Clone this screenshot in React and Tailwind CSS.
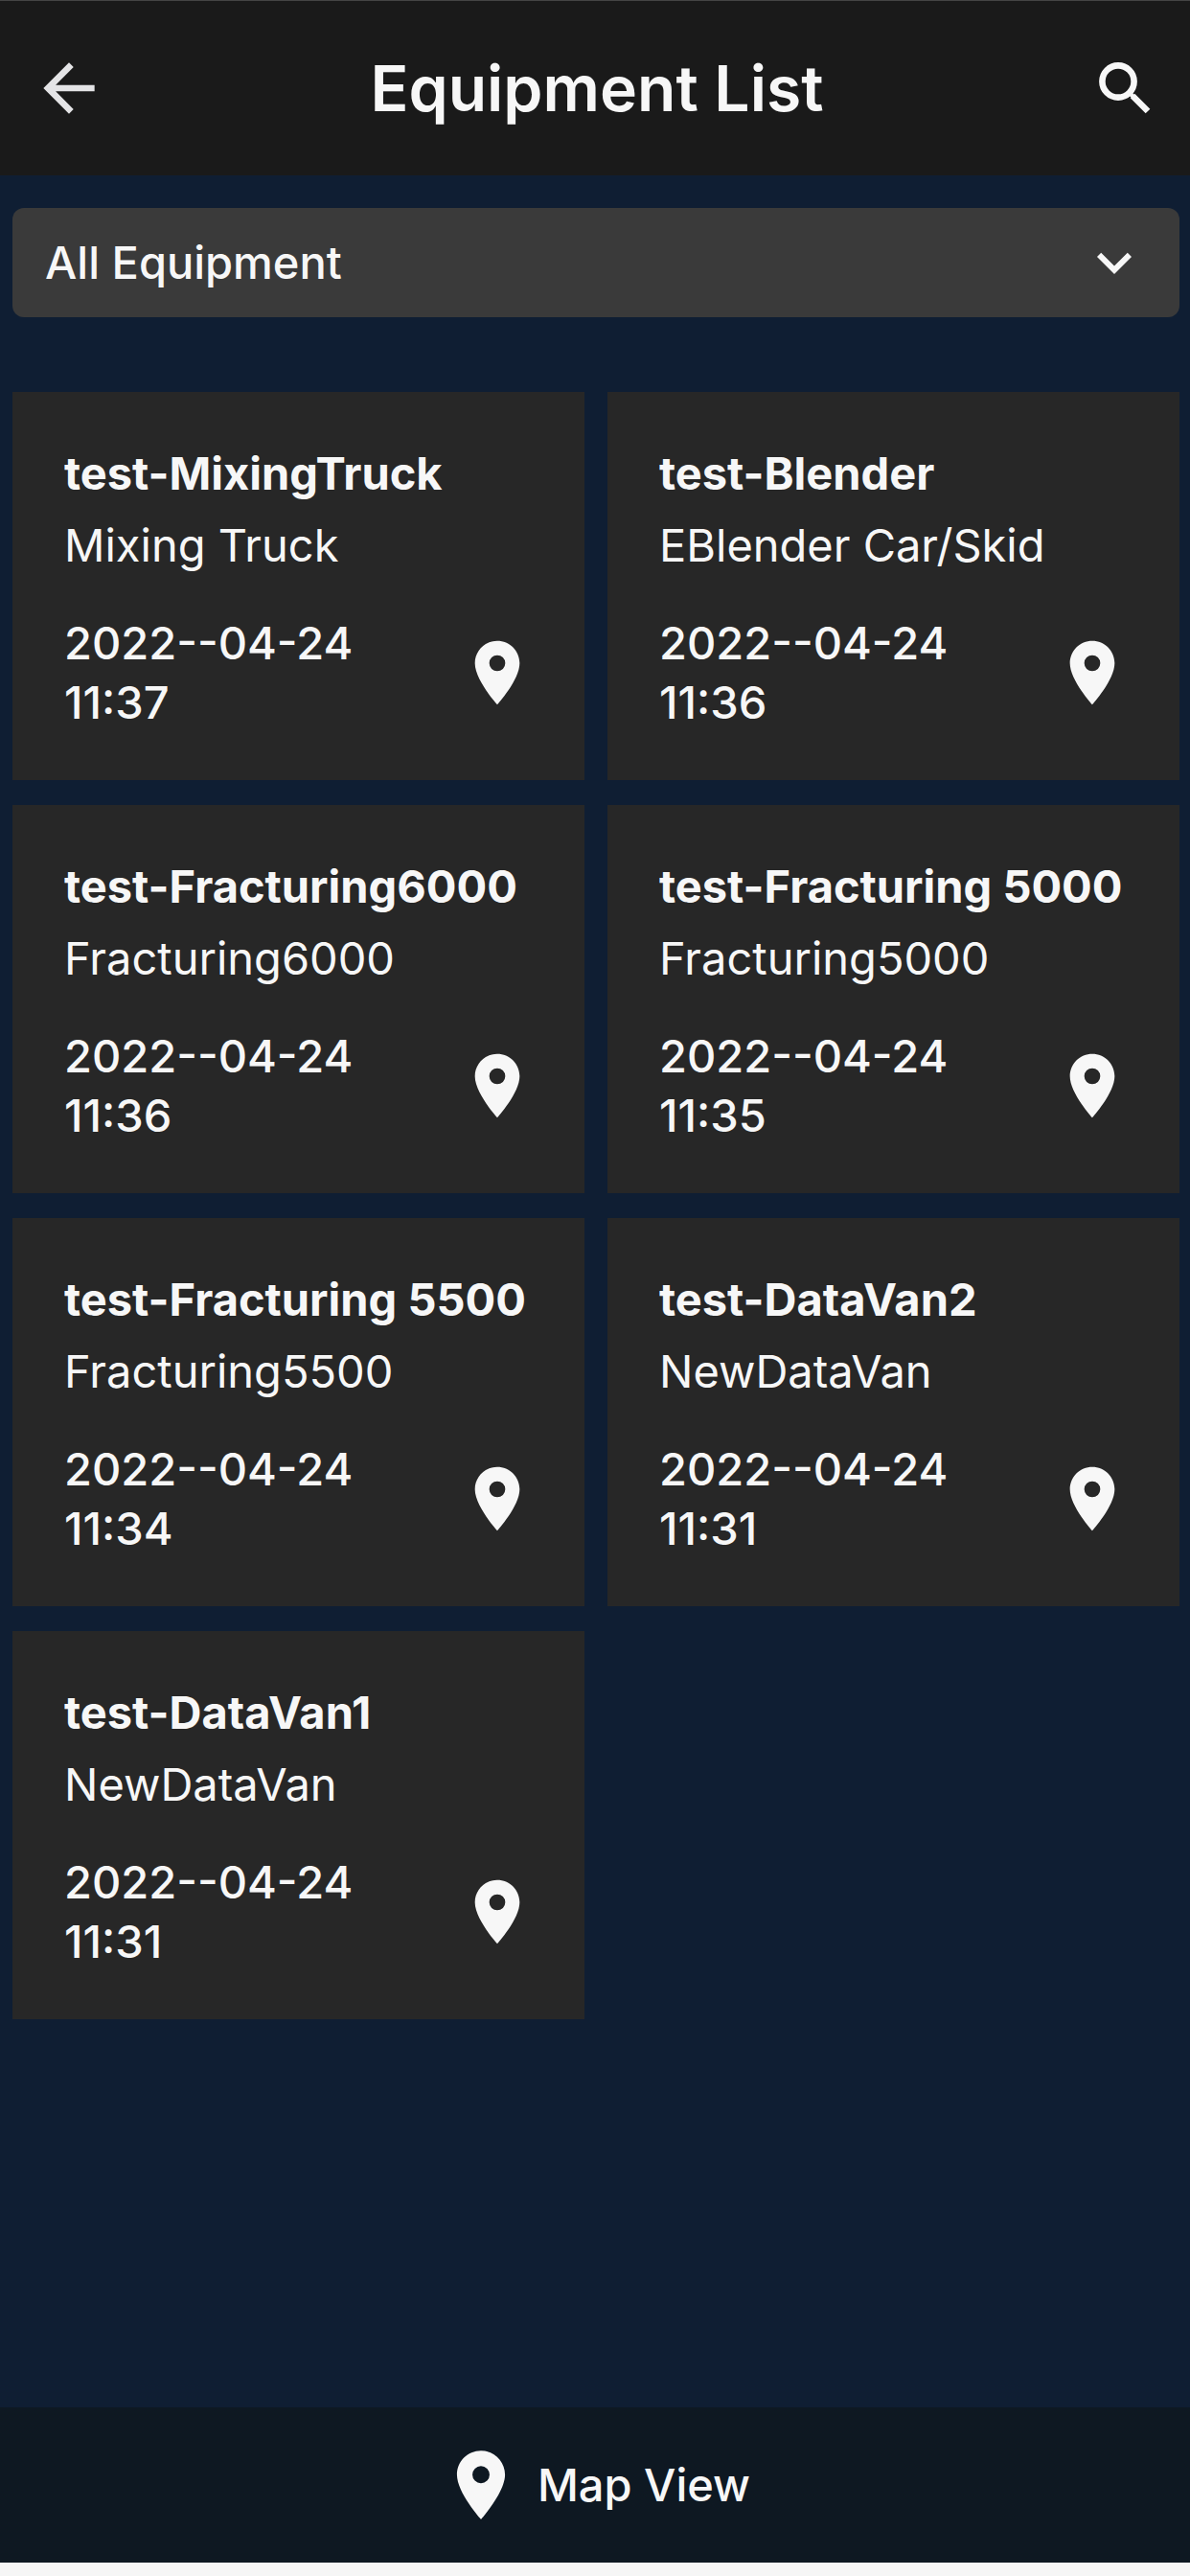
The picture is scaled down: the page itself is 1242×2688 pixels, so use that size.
import { useState } from "react";
import { MdArrowBack, MdKeyboardArrowDown, MdLocationOn } from "react-icons/md";

const equipment = [
  { name: "test-MixingTruck", type: "Mixing Truck", date: "2022--04-24", time: "11:37" },
  { name: "test-Blender", type: "EBlender Car/Skid", date: "2022--04-24", time: "11:36" },
  { name: "test-Fracturing6000", type: "Fracturing6000", date: "2022--04-24", time: "11:36" },
  { name: "test-Fracturing 5000", type: "Fracturing5000", date: "2022--04-24", time: "11:35" },
  { name: "test-Fracturing 5500", type: "Fracturing5500", date: "2022--04-24", time: "11:34" },
  { name: "test-DataVan2", type: "NewDataVan", date: "2022--04-24", time: "11:31" },
  { name: "test-DataVan1", type: "NewDataVan", date: "2022--04-24", time: "11:31" },
];

const SearchIcon = () => {
  return (
    <svg viewBox="0 0 54 54" fill="none" stroke="currentColor" className="size-[54px]">
      <circle cx="20" cy="20" r="16.6" strokeWidth="6.6" />
      <path d="M33 33l3 3" strokeWidth="4.5" />
      <path d="M35 35l16 16" strokeWidth="6.6" />
    </svg>
  );
};

const EquipmentCard = ({ item }) => {
  return (
    <li className="bg-[#272727] pt-[47px] pb-[50px] pl-[54px] pr-[51px]">
      <h2 className="font-bold leading-[75px] whitespace-nowrap">{item.name}</h2>
      <p className="leading-[75px] whitespace-nowrap">{item.type}</p>
      <div className="mt-[34px] flex items-center justify-between">
        <p className="font-medium leading-[62px]">
          {item.date}
          <br />
          {item.time}
        </p>
        <button type="button" aria-label={`Locate ${item.name}`}>
          <MdLocationOn className="size-20" />
        </button>
      </div>
    </li>
  );
};

const App = () => {
  const [filter, setFilter] = useState("all");

  const visible = equipment.filter(
    (item) => filter === "all" || item.type === filter
  );
  const types = [...new Set(equipment.map((item) => item.type))];

  return (
    <div className="flex min-h-screen flex-col bg-[#0f1e33] font-['Inter',sans-serif] text-[47px] text-[#f7f7f7]">
      <header className="flex h-[183px] items-center justify-between border-t border-[#444444] bg-[#1a1a1a] pr-7 pl-8">
        <button type="button" aria-label="Back" className="text-[#e4e4e6]">
          <MdArrowBack className="size-20" />
        </button>
        <h1 className="text-[66px] font-semibold">Equipment List</h1>
        <button
          type="button"
          aria-label="Search"
          className="flex size-20 items-center justify-center"
        >
          <SearchIcon />
        </button>
      </header>

      <main className="flex-1 pt-[34px] pr-[11px] pl-[13px]">
        <div className="relative">
          <select
            aria-label="Equipment type"
            value={filter}
            onChange={(e) => setFilter(e.target.value)}
            className="h-[114px] w-full appearance-none rounded-xl bg-[#3a3a3a] pr-28 pl-[34px] font-medium"
          >
            <option value="all">All Equipment</option>
            {types.map((type) => (
              <option key={type} value={type}>
                {type}
              </option>
            ))}
          </select>
          <MdKeyboardArrowDown className="pointer-events-none absolute inset-y-0 right-8 my-auto size-[72px]" />
        </div>

        <ul className="mt-[78px] grid grid-cols-2 gap-x-6 gap-y-[26px]">
          {visible.map((item) => (
            <EquipmentCard key={item.name} item={item} />
          ))}
        </ul>
      </main>

      <footer className="border-b-[14px] border-[#f6f6f6] bg-[#0e1822]">
        <button
          type="button"
          className="flex h-[162px] w-full items-center justify-center gap-4 font-medium"
        >
          <MdLocationOn className="size-[86px]" />
          Map View
        </button>
      </footer>
    </div>
  );
};

export default App;
